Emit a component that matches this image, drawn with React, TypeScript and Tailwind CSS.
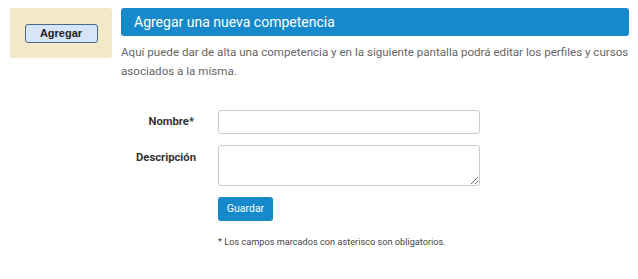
export default function App() {
  return (
    <div className="w-[638px] h-[279px] bg-white font-['Roboto',sans-serif] text-[11.25px] text-[#555]">
      <div className="flex items-start pt-2 pl-[10px] pr-[9px]">
        {/* Left action box */}
        <div className="w-[102px] h-[50px] shrink-0 bg-[#f3e9c6] rounded-[3px] flex items-center justify-center">
          <button
            type="button"
            className="w-[73px] h-[19px] mt-px bg-[#d6e6f8] border border-[#4a6a8c] rounded-[3px] text-[11px] font-bold text-[#222] leading-none font-['Liberation_Sans',sans-serif]"
          >
            Agregar
          </button>
        </div>

        {/* Main content */}
        <div className="flex-1 ml-[9px]">
          <div className="h-[28px] bg-[#1589c9] rounded-[3px] flex items-center pl-[13px] text-white text-[14px]">
            Agregar una nueva competencia
          </div>
          <p className="mt-[7px] text-[11.6px] leading-[19px] text-[#666]">
            Aquí puede dar de alta una competencia y en la siguiente pantalla podrá editar los perfiles y cursos asociados a la mísma.
          </p>

          <form className="mt-[29px] -ml-[121px]">
            <div className="flex items-center">
              <label className="w-[197px] text-right pr-[3px] text-[11.25px] font-bold text-[#333]">Nombre*</label>
              <input
                type="text"
                className="ml-[21px] w-[262px] h-[24px] border border-[#ccc] rounded-[3px] outline-none"
              />
            </div>
            <div className="flex items-start mt-[11px]">
              <label className="w-[197px] text-right text-[11.25px] font-bold text-[#333] mt-[5px] pr-[1px]">Descripción</label>
              <textarea className="ml-[21px] w-[262px] h-[41px] border border-[#ccc] rounded-[3px] outline-none block" />
            </div>
            <div className="ml-[218px] mt-[11px]">
              <button
                type="button"
                className="w-[55px] h-[24px] bg-[#1589c9] rounded-[3px] text-white text-[10.5px] leading-none"
              >
                Guardar
              </button>
              <p className="mt-[14px] text-[9.2px] text-[#444]">* Los campos marcados con asterisco son obligatorios.</p>
            </div>
          </form>
        </div>
      </div>
    </div>
  )
}
